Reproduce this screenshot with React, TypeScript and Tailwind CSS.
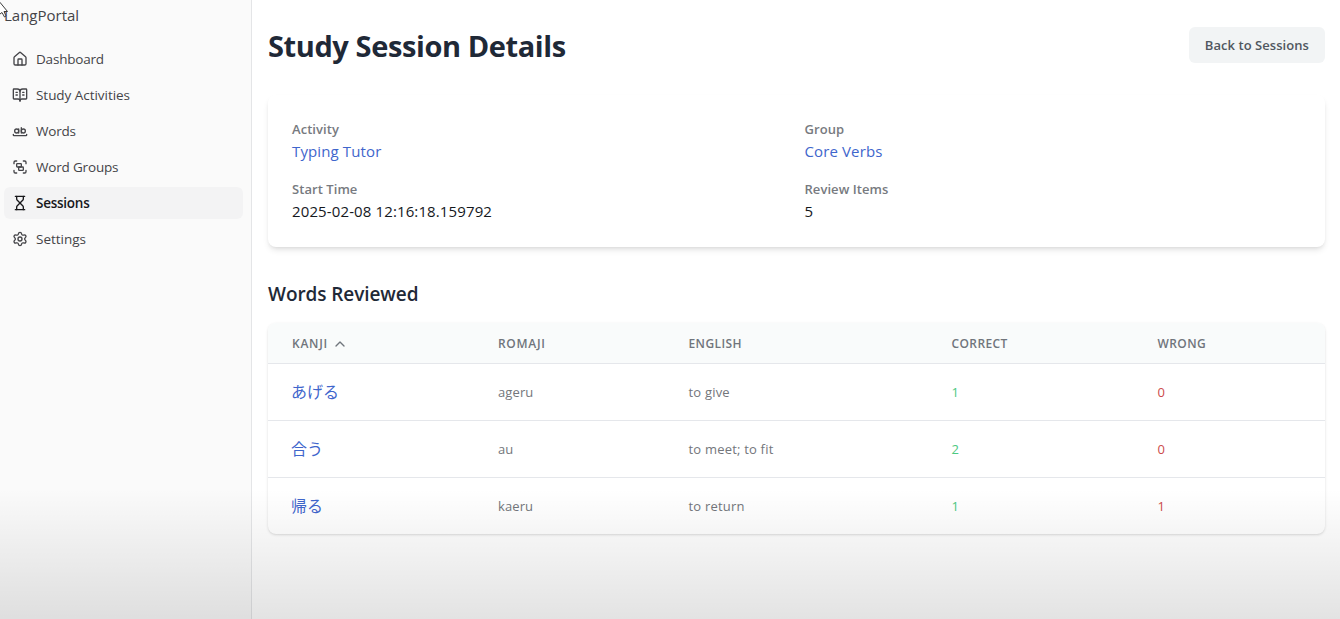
import { BookOpenText, ChevronUp, Group, Hourglass, House, Settings, WholeWord } from 'lucide-react'
import type { LucideIcon } from 'lucide-react'

const navItems: { label: string; icon: LucideIcon; tracking: string; active?: boolean }[] = [
  { label: 'Dashboard', icon: House, tracking: 'tracking-[-0.2px]' },
  { label: 'Study Activities', icon: BookOpenText, tracking: 'tracking-[-0.04px]' },
  { label: 'Words', icon: WholeWord, tracking: 'tracking-[-0.2px]' },
  { label: 'Word Groups', icon: Group, tracking: 'tracking-[-0.18px]' },
  { label: 'Sessions', icon: Hourglass, tracking: 'tracking-[-0.25px]', active: true },
  { label: 'Settings', icon: Settings, tracking: 'tracking-[0px]' },
]

const words = [
  { kanji: 'あげる', romaji: 'ageru', english: 'to give', correct: 1, wrong: 0 },
  { kanji: '合う', romaji: 'au', english: 'to meet; to fit', correct: 2, wrong: 0 },
  { kanji: '帰る', romaji: 'kaeru', english: 'to return', correct: 1, wrong: 1 },
]

const columns = 'grid grid-cols-[206px_190.5px_263px_206px_1fr] px-6'

function Sidebar() {
  return (
    <aside className="flex w-[252px] shrink-0 flex-col border-r border-[#e4e5e7] bg-[#fafafa] text-[#444448]">
      <div className="flex h-8 items-center pb-0.5 pl-1 text-[15px] tracking-[0px]">LangPortal</div>
      <nav className="mt-[11px] flex flex-col gap-1 pr-2 pl-1">
        {navItems.map(({ label, icon: Icon, tracking, active }) => (
          <a
            key={label}
            className={`flex h-8 items-center gap-2 rounded-md px-2 text-[13.5px] ${tracking} ${
              active ? 'bg-[#f3f3f4] font-semibold text-[#18181b]' : ''
            }`}
          >
            <Icon className="size-4" />
            {label}
          </a>
        ))}
      </nav>
    </aside>
  )
}

function Detail({ label, value, link }: { label: string; value: string; link?: boolean }) {
  return (
    <div>
      <div className="text-[13px] leading-5 font-semibold tracking-[0.06px] text-[#777a80]">{label}</div>
      <div className={`text-[15px] leading-6 tracking-[0.12px] ${link ? 'text-[#3f66cc]' : 'text-[#15181d]'}`}>{value}</div>
    </div>
  )
}

export default function App() {
  return (
    <div className="relative flex h-[619px] overflow-hidden bg-white font-['Open_Sans','Noto_Sans_CJK_JP',sans-serif]">
      <Sidebar />
      <main className="flex-1 pt-[27px] pr-[15px] pl-4">
        <header className="flex h-9 items-center justify-between">
          <h1 className="pt-px text-[29px] leading-9 font-bold tracking-[-0.4px] text-[#1f2937]">Study Session Details</h1>
          <button className="h-9 rounded-md bg-[#f2f4f5] px-4 pt-0.5 text-[13px] font-semibold tracking-[0.06px] text-[#505760]">
            Back to Sessions
          </button>
        </header>

        <section className="mt-8 grid h-[152px] grid-cols-2 gap-x-4 gap-y-4 rounded-lg bg-white p-6 shadow-[0_4px_6px_-1px_rgba(0,0,0,0.1),0_2px_4px_-2px_rgba(0,0,0,0.1)]">
          <Detail label="Activity" value="Typing Tutor" link />
          <Detail label="Group" value="Core Verbs" link />
          <Detail label="Start Time" value="2025-02-08 12:16:18.159792" />
          <Detail label="Review Items" value="5" />
        </section>

        <h2 className="mt-[33px] text-[19px] leading-7 font-semibold tracking-[-0.08px] text-[#1f2937]">Words Reviewed</h2>

        <section className="mt-[15px] overflow-hidden rounded-lg bg-white shadow-[0_1px_3px_rgba(0,0,0,0.12),0_1px_2px_-1px_rgba(0,0,0,0.1)]">
          <div className={`${columns} h-10 items-center bg-[#f9fbfb] pt-px text-[12px] font-semibold tracking-[0.4px] text-[#70757c]`}>
            <span className="flex items-center gap-1">
              <span className="tracking-[0.75px]">KANJI</span> <ChevronUp className="size-4" />
            </span>
            <span className="tracking-[0.7px]">ROMAJI</span>
            <span>ENGLISH</span>
            <span>CORRECT</span>
            <span>WRONG</span>
          </div>
          {words.map((word) => (
            <div key={word.kanji} className={`${columns} h-[57px] items-center border-t border-[#e5e7eb] text-[13px] text-[#73767b]`}>
              <span className="-ml-px text-base text-[#3f66cc]">{word.kanji}</span>
              <span className="pt-0.5 tracking-[0.1px]">{word.romaji}</span>
              <span className="pt-0.5 tracking-[0.2px]">{word.english}</span>
              <span className="pt-0.5 text-[#4cc982]">{word.correct}</span>
              <span className="pt-0.5 text-[#cc4b4b]">{word.wrong}</span>
            </div>
          ))}
        </section>
      </main>

      <div className="pointer-events-none absolute inset-x-0 bottom-0 h-[130px] bg-linear-to-b from-transparent to-black/11" />
      <svg className="absolute top-0 left-0" width="10" height="20" viewBox="0 0 10 20" fill="white" stroke="#3a3a3a" strokeWidth="1">
        <path d="M-2 .5 L.5 3 L7.5 11.5 H4 L6 16 L4.5 17 L2 12.5 L-2 15.5" />
      </svg>
    </div>
  )
}
